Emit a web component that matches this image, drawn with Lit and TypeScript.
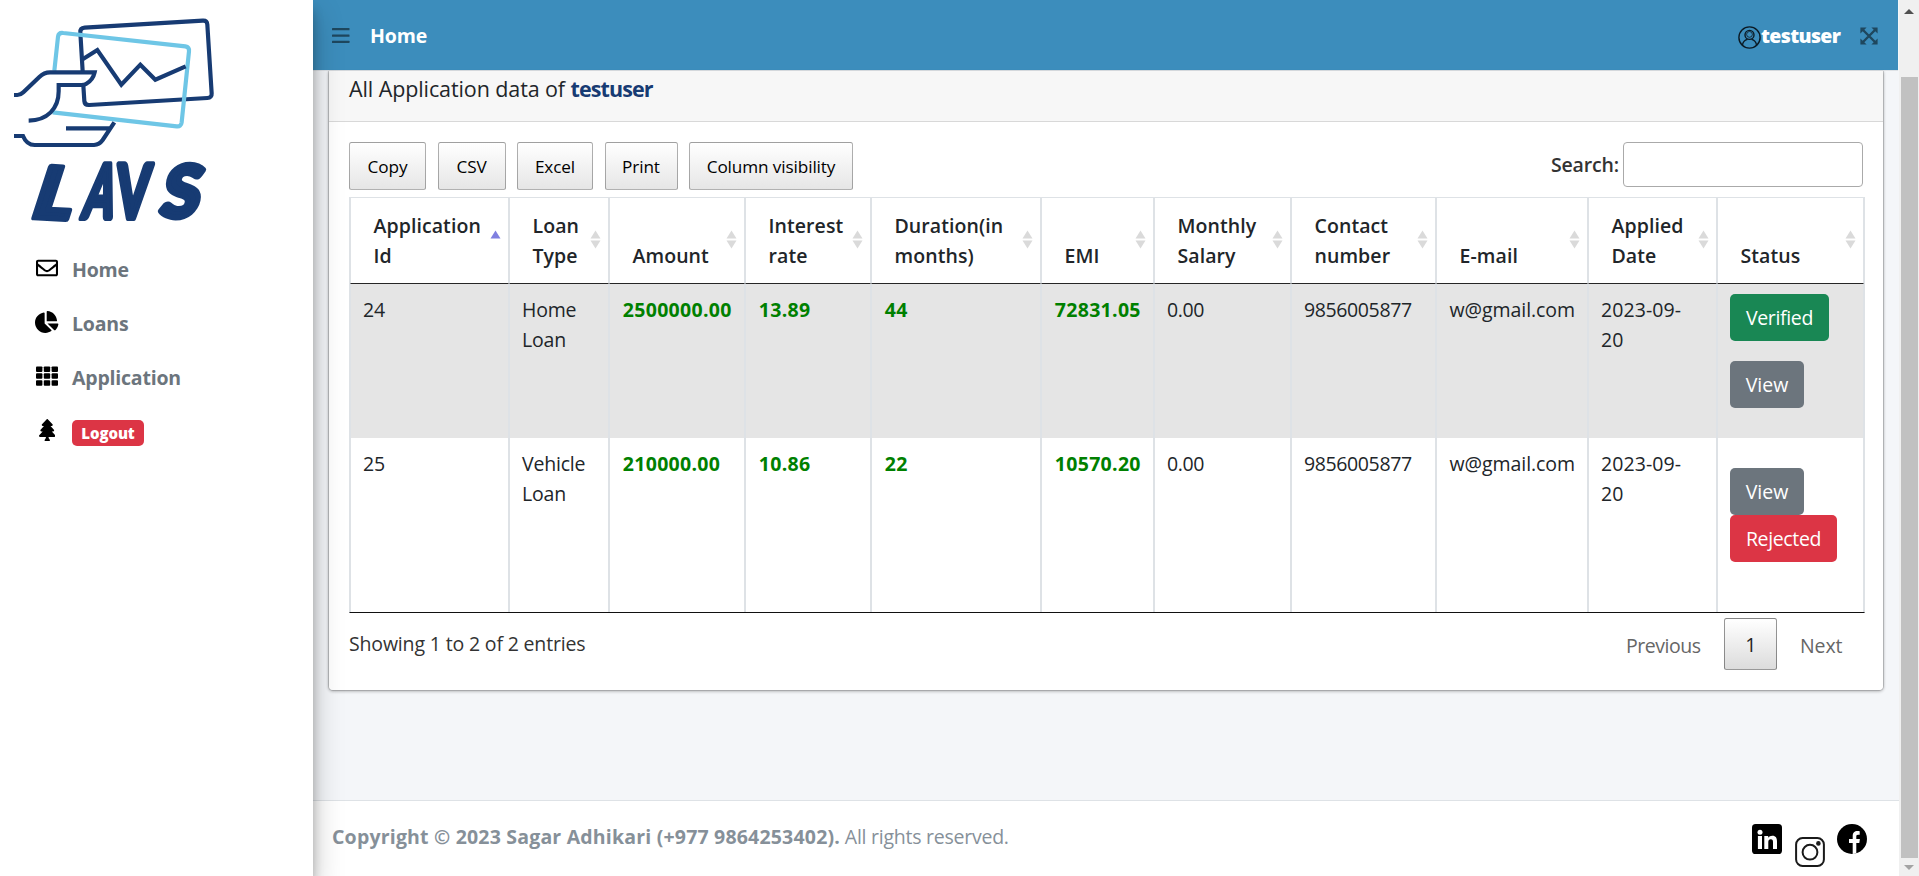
import { LitElement, html, css, svg } from "lit";
import { customElement } from "lit/decorators.js";
import { classMap } from "lit/directives/class-map.js";

interface Column {
  lines: string[];
  width: number;
}

const columns: Column[] = [
  { lines: ["Application", "Id"], width: 159 },
  { lines: ["Loan", "Type"], width: 100 },
  { lines: ["Amount"], width: 136 },
  { lines: ["Interest", "rate"], width: 126 },
  { lines: ["Duration(in", "months)"], width: 170 },
  { lines: ["EMI"], width: 113 },
  { lines: ["Monthly", "Salary"], width: 137 },
  { lines: ["Contact", "number"], width: 145 },
  { lines: ["E-mail"], width: 152 },
  { lines: ["Applied", "Date"], width: 129 },
  { lines: ["Status"], width: 147 },
];

const applications = [
  { id: "24", type: ["Home", "Loan"], amount: "2500000.00", rate: "13.89", months: "44", emi: "72831.05", verified: true },
  { id: "25", type: ["Vehicle", "Loan"], amount: "210000.00", rate: "10.86", months: "22", emi: "10570.20", verified: false },
];

const stack = (lines: string[]) => lines.map((l, i) => (i ? html`<br />${l}` : l));

@customElement("app-logo")
export class AppLogo extends LitElement {
  static styles = css`
    :host { display: block; height: 240px; }
    svg { display: block; }
    .dark { fill: none; stroke: #173b73; stroke-width: 12.5; }
    .light { fill: none; stroke: #6ec6e6; stroke-width: 12.5; }
    text { font: 900 214px Lato, "Open Sans", sans-serif; fill: #173b73; stroke: #173b73; stroke-width: 17; stroke-linejoin: round; }
  `;
  render() {
    return html`<svg width="300" height="240" viewBox="0 0 900 720">
      <path class="dark" d="M248 214 241 98Q240 84 254 83L608 62Q621 61 622 74L635 280Q636 293 622 294L268 315Q254 316 253 303L250 256" />
      <path class="light" d="M163 212 174 110Q176 97 190 99L556 139Q569 141 567 154L545 367Q543 381 530 379L158 337" />
      <path class="dark" d="M248 178 292 150 364 254 421 194 466 239 557 199" />
      <path class="dark" d="M42 285H52Q62 285 70 277L118 231Q132 217 150 217H284Q279 240 258 252Q253 255 244 255H176V274C176 326 142 361 86 362" />
      <path class="dark" d="M42 408H69Q80 435 104 435H282Q298 434 308 420L343 367M198 385H328" />
      <text transform="translate(86 652) rotate(3) skewX(-15) scale(1.04 1)">L</text>
      <text transform="translate(242 655) skewX(-12) scale(.6 1.04)">A</text>
      <text transform="translate(342 655) skewX(-5) scale(.68 1.04)">V</text>
      <text transform="translate(474 652) skewX(-12) scale(.98 1)">S</text>
    </svg>`;
  }
}

const icons = {
  envelope: svg`<svg width="22" height="22" viewBox="0 0 512 512"><path d="M464 64H48C21.49 64 0 85.49 0 112v288c0 26.51 21.49 48 48 48h416c26.51 0 48-21.49 48-48V112c0-26.51-21.49-48-48-48zm0 48v40.805c-22.422 18.259-58.168 46.651-134.587 106.49-16.841 13.247-50.201 45.072-73.413 44.701-23.208.375-56.579-31.459-73.413-44.701C106.18 199.465 70.425 171.067 48 152.805V112h416zM48 400V214.398c22.914 18.251 55.409 43.862 104.938 82.646 21.857 17.205 60.134 55.186 103.062 54.955 42.717.231 80.509-37.199 103.053-54.947 49.528-38.783 82.032-64.401 104.947-82.653V400H48z"/></svg>`,
  pie: svg`<svg width="23.4" height="22" viewBox="0 0 544 512"><path d="M527.79 288H290.5l158.03 158.03c6.04 6.04 15.98 6.53 22.19.68 38.7-36.46 65.32-85.61 73.13-140.86 1.34-9.46-6.51-17.85-16.06-17.85zm-15.83-64.8C503.72 103.74 408.26 8.28 288.8.04 279.68-.59 272 7.1 272 16.24V240h223.77c9.14 0 16.82-7.68 16.19-16.8zM224 288V50.71c0-9.55-8.39-17.4-17.84-16.06C86.99 51.49-4.1 155.6.14 280.37 4.5 408.51 114.83 513.59 243.03 511.98c50.4-.63 96.97-16.87 135.26-44.03 7.9-5.6 8.42-17.23 1.57-24.08L224 288z"/></svg>`,
  grid: svg`<svg width="22" height="22" viewBox="0 0 512 512">${[32, 192, 352].map((y) =>
    [0, 181, 363].map((x) => svg`<rect x=${x} y=${y} width="149" height="128" rx="22"/>`))}</svg>`,
  tree: svg`<svg width="16.5" height="22" viewBox="0 0 384 512"><path d="M378.31 378.49L298.42 288h30.63c9.01 0 16.98-5 20.78-13.06 3.8-8.04 2.55-17.26-3.28-24.05L268.42 160h28.89c9.1 0 17.3-5.35 20.86-13.61 3.52-8.13 1.86-17.59-4.24-24.08L203.66 4.83c-6.03-6.45-17.28-6.45-23.32 0L70.06 122.31c-6.1 6.49-7.75 15.95-4.24 24.08C69.38 154.65 77.59 160 86.69 160h28.89l-78.14 90.91c-5.81 6.78-7.06 15.99-3.27 24.04C37.97 283 45.93 288 54.95 288h30.63L5.69 378.49c-6 6.79-7.36 16.09-3.56 24.26 3.75 8.05 12 13.25 21.01 13.25H160v24.45l-30.29 48.4c-5.32 10.64 2.42 23.16 14.31 23.16h95.96c11.89 0 19.63-12.52 14.31-23.16L224 440.45V416h136.86c9.01 0 17.26-5.2 21.01-13.25 3.8-8.17 2.44-17.47-3.56-24.26z"/></svg>`,
  bars: svg`<svg width="18" height="16" viewBox="0 0 18 16" fill="#1e475e"><rect y="0" width="17.5" height="2.3" rx=".5"/><rect y="6.4" width="17.5" height="2.3" rx=".5"/><rect y="12.8" width="17.5" height="2.3" rx=".5"/></svg>`,
  user: svg`<svg width="23" height="23" viewBox="0 0 23 23" fill="none" stroke="#0b1a24" stroke-width="1.4"><circle cx="11.5" cy="11.5" r="10.6"/><circle cx="11.5" cy="8.900" r="4.500"/><circle cx="11.500" cy="8.400" r="2.900" stroke-width=".8"/><path d="M4.400 19.400C4.900 16 6.600 14 9.400 13.400M18.600 19.400C18.100 16 16.400 14 13.600 13.400"/></svg>`,
  expand: svg`<svg width="18" height="18" viewBox="0 0 18 18" fill="#1e475e"><path d="M3 3 15 15M15 3 3 15" stroke="#1e475e" stroke-width="2.4"/><path d="M.4.4H6.6L.4 6.6zM17.6.4H11.4L17.6 6.6zM.4 17.6H6.6L.4 11.4zM17.6 17.6H11.4L17.6 11.4z"/></svg>`,
  linkedin: svg`<svg width="30" height="30" viewBox="0 0 30 30"><rect width="30" height="30" rx="3.6"/><circle cx="8" cy="8.2" r="2.5" fill="#fff"/><path fill="#fff" d="M5.9 12H10V25H5.9zM12.3 12h3.9v1.8c.8-1.3 2.3-2.1 4.1-2.1 3.6 0 4.7 2.4 4.7 5.8V25h-4v-6.8c0-1.7-.4-3-2.2-3s-2.5 1.300-2.500 3V25h-4z"/></svg>`,
  instagram: svg`<svg width="30" height="30" viewBox="0 0 30 30" fill="none" stroke="#1a1a1a" stroke-width="2"><rect x="1.100" y="1.100" width="27.800" height="27.800" rx="6.500"/><circle cx="15" cy="15.200" r="7.400"/><circle cx="23.400" cy="6.400" r="1.600" fill="#1a1a1a" stroke-width="1.400"/></svg>`,
  facebook: svg`<svg width="30" height="30" viewBox="0 0 30 30"><circle cx="15" cy="15" r="15"/><path fill="#fff" d="M15.700 30V19H12v-4h3.700v-2.800C15.700 8.600 17.600 7 20.400 7c1 0 1.700.1 2.300.2v3.500h-1.700c-1.400 0-1.700.8-1.700 1.800V15h3.600l-.6 4h-3v10.200c-1 .5-2.400.8-3.600.8z"/></svg>`,
};

@customElement("app-root")
export class AppRoot extends LitElement {
  static styles = css`
    :host { display: block; font: 400 19.5px/30px "Open Sans", "Noto Sans", sans-serif; color: #212529; }
    * { box-sizing: border-box; }
    svg { display: block; flex: none; }
    .page { display: grid; grid-template-columns: 313px minmax(0, 1fr) 20px; height: 876px; overflow: hidden; }

    .sidebar { background: #fff; z-index: 2; box-shadow: 0 14px 28px rgba(0,0,0,.25), 0 10px 10px rgba(0,0,0,.22); }
    .nav { display: flex; flex-direction: column; padding-top: 2px; }
    .item { display: flex; height: 54px; align-items: center; padding: 0 0 0 29px; color: #6c757d; font-weight: 700; letter-spacing: -.2px; }
    .item .ico { width: 36px; height: 54px; display: flex; justify-content: center; padding-top: 15px; }
    .item .label { padding: 1px 0 0 7px; }
    .badge { margin: 3px 0 0 7px; width: 72px; height: 26px; border-radius: 5px; background: #dc3545; color: #fff; font-weight: 800; font-size: 15px; line-height: 26px; text-align: center; letter-spacing: -.1px; }

    .main { display: flex; flex-direction: column; background: #f4f6f9; min-width: 0; }
    .topbar { height: 71px; flex: none; display: flex; align-items: flex-start; background: #3c8dbc; border-bottom: 1px solid #dee2e6; color: #fff; padding: 0 20px 0 19px; margin-right: 1px; }
    .topbar .bars { padding-top: 28px; width: 38px; }
    .topbar .link { font-weight: 700; padding-top: 21px; letter-spacing: -.15px; }
    .topbar .who { margin-left: auto; display: flex; }
    .topbar .who svg { margin-top: 26px; }
    .topbar .name { font-weight: 800; letter-spacing: -.65px; padding-top: 21px; width: 99px; }
    .topbar .expand { padding-top: 27px; }

    .card { margin: 0 15px 0 15px; height: 620px; background: #fff; border: 1px solid rgba(0,0,0,.06); border-top: 0; border-radius: 0 0 5px 5px; box-shadow: 0 0 1px rgba(0,0,0,.125), 0 1px 3px rgba(0,0,0,.2); background-clip: padding-box; flex: none; }
    .title { height: 51px; background: #f7f7f7; border-bottom: 1px solid rgba(0,0,0,.125); padding: 3px 20px 0; font-size: 21.5px; letter-spacing: -.1px; }
    .title b { color: #173b73; letter-spacing: -.9px; }
    .body { padding: 20px 18px 0 20px; }
    .tools { display: flex; height: 55px; align-items: flex-start; padding-right: 2px; }
    .tool { height: 48px; margin-right: 11.500px; border: 1px solid rgba(0,0,0,.3); border-radius: 2.500px; background: linear-gradient(to bottom, #fff, #e6e6e6); color: #000; font: 400 17.2px/47px "Open Sans", sans-serif; padding: 0; text-align: center; letter-spacing: -.12px; white-space: nowrap; }
    .search { margin-left: auto; display: flex; font-weight: 600; color: #333; letter-spacing: -.15px; line-height: 46px; gap: 4px; }
    .search input { width: 240px; height: 45px; border: 1px solid #aaa; border-radius: 4px; background: transparent; padding: 6px; }

    table { width: 1516px; table-layout: fixed; border-collapse: separate; border-spacing: 0; border: 1px solid #dee2e6; border-bottom-color: #111; }
    th, td { border: 0 solid #dee2e6; border-width: 0 1px; text-align: left; letter-spacing: -.2px; white-space: nowrap; }
    th { height: 86px; vertical-align: bottom; padding: 12px 0 12px 22.500px; border-bottom: 1px solid rgba(0,0,0,.85); font-weight: 600; letter-spacing: .08px; position: relative; }
    td { vertical-align: top; padding: 11px 0 0 12px; }
    td:last-child { padding-top: 10px; }
    .first td { height: 154px; background: #e5e5e5; }
    .second td { height: 174px; }
    .num { color: green; font-weight: 700; letter-spacing: .3px; padding-left: 12.800px; }
    .tight { letter-spacing: -.38px; }
    .mail { letter-spacing: -.06px; padding-left: 12.500px; }
    .date { letter-spacing: .1px; }
    .sort { position: absolute; right: 7px; top: 32px; }
    .btns { display: flex; flex-direction: column; align-items: flex-start; }
    .first .btns { gap: 20px; }
    .second .btns { padding-top: 20px; }
    .btn { height: 47px; border-radius: 5px; color: #fff; line-height: 48px; text-align: center; letter-spacing: -.35px; }
    .green { background: #198754; width: 99px; }
    .grey { background: #6c757d; width: 74px; letter-spacing: 0; }
    .red { background: #dc3545; width: 107px; }

    .foot { display: flex; align-items: flex-start; color: #333; padding-top: 5px; }
    .info { padding-top: 11px; letter-spacing: -.16px; margin-right: auto; }
    .pg { height: 52px; line-height: 51px; color: #666; letter-spacing: -.45px; padding-top: 1.500px; }
    .prev { width: 98px; }
    .cur { width: 53px; padding: 0; margin-right: 23px; text-align: center; border: 1px solid rgba(0,0,0,.4); border-radius: 2.500px; background: linear-gradient(to bottom, #fff, #dcdcdc); color: #222; line-height: 52px; }
    .next { width: 65px; letter-spacing: -.1px; }

    .footer { margin-top: auto; height: 76px; background: #fff; border-top: 1px solid #dee2e6; display: flex; align-items: flex-start; padding: 0 32px 0 19px; color: #869099; }
    .copy { padding-top: 21px; letter-spacing: -.25px; white-space: nowrap; }
    .copy b { letter-spacing: .19px; }
    .social { margin-left: auto; display: flex; gap: 12.500px; padding-top: 23px; }
    .social .low { padding-top: 13px; }

    .scroll { background: #f0f0f0; display: flex; flex-direction: column; align-items: center; padding-top: 9px; }
    .thumb { width: 17px; height: 781px; background: #c1c1c1; margin: 63px 0 7px 1px; }
  `;

  private nav = [
    { icon: icons.envelope, label: "Home" },
    { icon: icons.pie, label: "Loans" },
    { icon: icons.grid, label: "Application" },
  ];

  private exports = [
    { label: "Copy", width: 77 },
    { label: "CSV", width: 68 },
    { label: "Excel", width: 76 },
    { label: "Print", width: 73 },
    { label: "Column visibility", width: 164 },
  ];

  private sortMark(ascending: boolean) {
    return html`<svg class="sort" width="11" height="19" viewBox="0 0 11 19">
      <path d="M.5 8.500 5.500.5 10.500 8.500z" fill=${ascending ? "#7f7fe0" : "#dadada"} />
      ${ascending ? "" : svg`<path d="M.5 10.500H10.500L5.500 18.500z" fill="#dadada"/>`}
    </svg>`;
  }

  render() {
    return html`
      <div class="page">
        <aside class="sidebar">
          <app-logo></app-logo>
          <nav class="nav">
            ${this.nav.map((n) => html`<a class="item"><span class="ico">${n.icon}</span><span class="label">${n.label}</span></a>`)}
            <a class="item"><span class="ico">${icons.tree}</span><span class="badge">Logout</span></a>
          </nav>
        </aside>
        <div class="main">
          <header class="topbar">
            <span class="bars">${icons.bars}</span>
            <span class="link">Home</span>
            <span class="who">${icons.user}<span class="name">testuser</span></span>
            <span class="expand">${icons.expand}</span>
          </header>
          <section class="card">
            <div class="title">All Application data of <b>testuser</b></div>
            <div class="body">
              <div class="tools">
                ${this.exports.map((b) => html`<button class="tool" style="width:${b.width}px">${b.label}</button>`)}
                <label class="search">Search:<input type="search" /></label>
              </div>
              <table>
                <colgroup>${columns.map((c) => html`<col style="width:${c.width}px" />`)}</colgroup>
                <thead><tr>${columns.map((c, i) => html`<th>${stack(c.lines)}${this.sortMark(i === 0)}</th>`)}</tr></thead>
                <tbody>
                  ${applications.map((a, i) => html`<tr class=${classMap({ first: i === 0, second: i === 1 })}>
                    <td>${a.id}</td>
                    <td>${stack(a.type)}</td>
                    <td class="num">${a.amount}</td>
                    <td class="num">${a.rate}</td>
                    <td class="num">${a.months}</td>
                    <td class="num">${a.emi}</td>
                    <td class="tight">0.00</td>
                    <td class="tight">9856005877</td>
                    <td class="mail">w@gmail.com</td>
                    <td class="date">2023-09-<br />20</td>
                    <td><div class="btns">
                      ${a.verified
                        ? html`<span class="btn green">Verified</span><span class="btn grey">View</span>`
                        : html`<span class="btn grey">View</span><span class="btn red">Rejected</span>`}
                    </div></td>
                  </tr>`)}
                </tbody>
              </table>
              <div class="foot">
                <span class="info">Showing 1 to 2 of 2 entries</span>
                <span class="pg prev">Previous</span>
                <span class="pg cur">1</span>
                <span class="pg next">Next</span>
              </div>
            </div>
          </section>
          <footer class="footer">
            <span class="copy"><b>Copyright © 2023 Sagar Adhikari (+977 9864253402).</b> All rights reserved.</span>
            <span class="social">${icons.linkedin}<span class="low">${icons.instagram}</span>${icons.facebook}</span>
          </footer>
        </div>
        <div class="scroll">
          <svg width="10" height="5" viewBox="0 0 10 5"><path d="M0 5 5 0 10 5z" fill="#505050" /></svg>
          <div class="thumb"></div>
          <svg width="10" height="5" viewBox="0 0 10 5"><path d="M0 0H10L5 5z" fill="#a3a3a3" /></svg>
        </div>
      </div>
    `;
  }
}
